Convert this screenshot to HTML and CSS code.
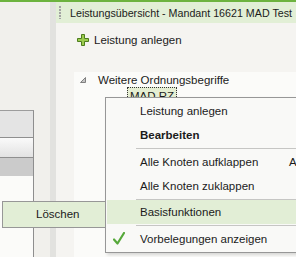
FILE: index.html
```html
<!DOCTYPE html>
<html lang="de">
<head>
    <meta charset="UTF-8">
    <meta name="viewport" content="width=device-width, initial-scale=1.0">
    <title>Leistungsübersicht</title>
    <link rel="stylesheet" href="styles.css">
</head>
<body>
    <div class="topline"></div>
    <div class="app">
        <aside class="side">
            <div class="grid">
                <div class="grid-row r1"></div>
                <div class="grid-row r2"></div>
                <div class="grid-row r3"></div>
            </div>
        </aside>
        <div class="splitter"></div>
        <main class="main">
            <div class="title"><span class="grip"></span>Leistungsübersicht - Mandant 16621 MAD Test</div>
            <div class="toolbar">
                <svg class="plus" width="12" height="12" viewBox="0 0 12 12">
                    <path d="M4.5 0.5h3v4h4v3h-4v4h-3v-4h-4v-3h4z" fill="#9ccc4e" stroke="#4e7d1f" stroke-width="1"/>
                </svg>
                <span>Leistung anlegen</span>
            </div>
            <div class="tree">
                <div class="node">
                    <svg class="arrow" width="6" height="6" viewBox="0 0 6 6">
                        <path d="M5.5 0.5v5h-5z" fill="#c4c4c4" stroke="#808080" stroke-width="1"/>
                    </svg>
                    <span>Weitere Ordnungsbegriffe</span>
                </div>
                <div class="node child"><span class="label">MAD.RZ</span></div>
            </div>
        </main>
    </div>

    <div class="menu">
        <div class="item">Leistung anlegen</div>
        <div class="item bold">Bearbeiten</div>
        <div class="sep"></div>
        <div class="item"><span class="text">Alle Knoten aufklappen</span><span class="key">A</span></div>
        <div class="item">Alle Knoten zuklappen</div>
        <div class="sep tight"></div>
        <div class="item active">Basisfunktionen</div>
        <div class="sep"></div>
        <div class="item">
            <svg class="check" width="12" height="13" viewBox="0 0 12 13">
                <path d="M1 7.5l3.5 4 6.5-10.5" fill="none" stroke="#56a83a" stroke-width="2.2" stroke-linejoin="round" stroke-linecap="round"/>
            </svg>
            Vorbelegungen anzeigen
        </div>
    </div>

    <div class="submenu">Löschen</div>
</body>
</html>
```

FILE: styles.css
```css
html, body {
    margin: 0;
    padding: 0;
}
body {
    width: 296px;
    height: 257px;
    overflow: hidden;
    position: relative;
    font-family: "Liberation Sans", Arial, sans-serif;
    font-size: 11.5px;
    color: #1b1b1b;
    background-color: #f1f0ec;
}
.topline {
    height: 2px;
    background-color: #6db33f;
}
.app {
    display: flex;
    height: 255px;
}
.side {
    width: 50px;
    padding-top: 108px;
    box-sizing: border-box;
    background-color: #f1f0ec;
}
.grid {
    width: 34px;
    height: 100%;
    box-sizing: border-box;
    border-top: 1px solid #9c9c9c;
    border-right: 1px solid #8e8e8e;
    background-color: #fbfbf9;
}
.r1 {
    height: 26px;
    background-color: #e4e4e4;
}
.r2 {
    height: 19px;
    border-top: 1px solid #8f8f8f;
    border-bottom: 1px solid #8f8f8f;
    background: linear-gradient(#fafafa, #e2e2e2);
}
.r3 {
    height: 18px;
    background-color: #cbcbcb;
}
.splitter {
    width: 6px;
    background-color: #e2e2df;
}
.main {
    flex: 1;
    display: flex;
    flex-direction: column;
    background-color: #f5f4f1;
}
.title {
    height: 21px;
    display: flex;
    align-items: center;
    font-size: 10.7px;
    background-color: #e2efd6;
    white-space: nowrap;
}
.grip {
    width: 2px;
    height: 13px;
    margin-left: 3px;
    margin-right: 9px;
    background: repeating-linear-gradient(#a3a3a3 0 2px, transparent 2px 3px);
}
.toolbar {
    height: 49px;
    box-sizing: border-box;
    padding: 11px 0 0 21px;
    display: flex;
    align-items: flex-start;
    gap: 5px;
}
.toolbar span {
    line-height: 13px;
}
.tree {
    flex: 1;
    margin-left: 18px;
    background-color: #fbfbf9;
}
.node {
    display: flex;
    align-items: center;
    height: 16px;
    white-space: nowrap;
}
.arrow {
    margin-left: 6px;
    margin-right: 12px;
}
.child {
    padding-left: 53px;
}
.label {
    padding: 0 2px;
    line-height: 16px;
    border: 1px dotted #333;
    background-color: #e5eed2;
}
.menu {
    position: absolute;
    left: 105px;
    top: 97px;
    width: 230px;
    padding: 1px 0;
    border: 1px solid #979797;
    background-color: #f9f9f7;
    box-shadow: 2px 2px 3px rgba(0, 0, 0, 0.15);
}
.item {
    height: 24px;
    line-height: 24px;
    padding-left: 34px;
    display: flex;
    position: relative;
    white-space: nowrap;
}
.bold {
    font-weight: bold;
}
.item .text {
    width: 149px;
}
.active {
    margin-left: 1px;
    padding-left: 33px;
    background-color: #e2eed6;
}
.sep {
    height: 1px;
    margin: 1px 0 1px 30px;
    background-color: #c6c6c4;
}
.sep.tight {
    margin-bottom: 0;
}
.check {
    position: absolute;
    left: 7px;
    top: 5px;
}
.submenu {
    position: absolute;
    left: 2px;
    top: 201px;
    width: 104px;
    height: 27px;
    box-sizing: border-box;
    padding-left: 33px;
    line-height: 25px;
    border: 1px solid #979797;
    background-color: #e2eed6;
    z-index: 2;
}
```
